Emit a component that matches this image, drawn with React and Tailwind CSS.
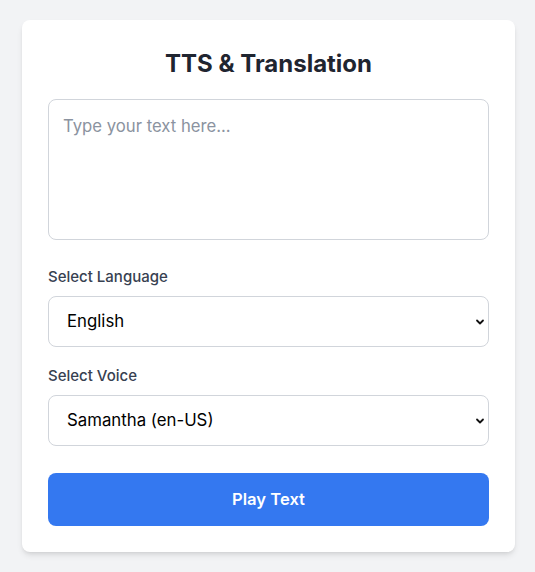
import { useState } from "react";

const Chevron = () => (
  <svg
    className="pointer-events-none absolute right-[4px] top-1/2 -translate-y-1/2"
    width="10"
    height="10"
    viewBox="0 0 10 10"
    aria-hidden="true"
  >
    <path d="M2 3.5 L5 6.5 L8 3.5" fill="none" stroke="#111" strokeWidth="1.8" strokeLinecap="round" strokeLinejoin="round" />
  </svg>
);

export default function App() {
  const [text, setText] = useState("");
  const [language, setLanguage] = useState("en");
  const [voice, setVoice] = useState("samantha");

  return (
    <div className="min-h-[572px] bg-[#f2f3f5] pt-[20px] font-['Inter',sans-serif]">
      <main className="ml-[22px] w-[493px] rounded-lg bg-white px-[26px] pt-[26px] pb-[26px] shadow-md">
        <h1 className="text-center text-[24px] leading-[36px] font-bold text-[#1f2530]">
          TTS &amp; Translation
        </h1>

        <textarea
          className="mt-[17px] block h-[141px] w-full resize-none rounded-lg border border-[#d1d5db] px-[14px] py-[14px] text-[16.7px] leading-[24px] text-gray-900 placeholder:text-[#8b93a0] focus:outline-none"
          placeholder="Type your text here..."
          value={text}
          onChange={(e) => setText(e.target.value)}
        />

        <label className="mt-[27px] mb-[9px] block text-[15px] leading-[20px] font-medium text-[#374151]">
          Select Language
        </label>
        <div className="relative">
          <select
            className="block h-[51px] w-full appearance-none rounded-lg border border-[#d1d5db] bg-white pl-[18px] text-[16.8px] text-black focus:outline-none"
            value={language}
            onChange={(e) => setLanguage(e.target.value)}
          >
            <option value="en">English</option>
            <option value="es">Spanish</option>
            <option value="fr">French</option>
          </select>
          <Chevron />
        </div>

        <label className="mt-[19px] mb-[9px] block text-[15px] leading-[20px] font-medium text-[#374151]">
          Select Voice
        </label>
        <div className="relative">
          <select
            className="block h-[51px] w-full appearance-none rounded-lg border border-[#d1d5db] bg-white pl-[18px] text-[16.8px] text-black focus:outline-none"
            value={voice}
            onChange={(e) => setVoice(e.target.value)}
          >
            <option value="samantha">Samantha (en-US)</option>
            <option value="daniel">Daniel (en-GB)</option>
          </select>
          <Chevron />
        </div>

        <button className="mt-[27px] block h-[53px] w-full rounded-lg bg-[#3478f0] text-[16.6px] font-semibold text-white">
          Play Text
        </button>
      </main>
    </div>
  );
}
